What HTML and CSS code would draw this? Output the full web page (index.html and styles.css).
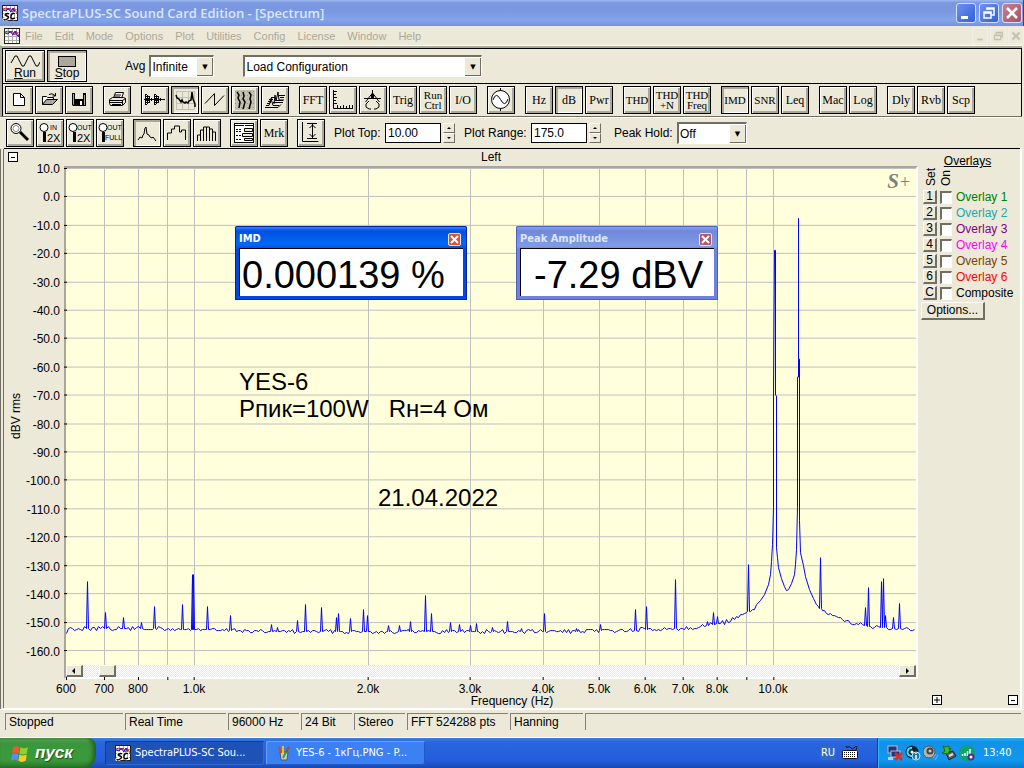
FILE: index.html
```html
<!DOCTYPE html>
<html lang="en">
<head>
  <meta charset="UTF-8">
  <meta name="viewport" content="width=device-width, initial-scale=1.0">
  <title>SpectraPLUS-SC Sound Card Edition - [Spectrum]</title>
  <link rel="stylesheet" href="styles.css">
</head>
<body>
  <!-- Shared drawings -->
  <svg class="defs" aria-hidden="true">
    <symbol id="app-icon" viewBox="0 0 16 16">
      <rect width="16" height="16" fill="#222"/>
      <rect x="1" y="1" width="14" height="14" fill="#fff"/>
      <path d="M4.500 1v14M8.500 1v14M12.500 1v14M1 4.500h14M1 8.500h14M1 12.500h14" stroke="#aaa"/>
      <path d="M1 4l3-1 2 2 2-2 3 4 1-4 2 3 1 3" fill="none" stroke="#e02020"/>
      <path d="M1 5l3 1 2-3 3 4 2-4 2 4 2 2" fill="none" stroke="#1010e0"/>
    </symbol>
    <symbol id="app-icon-sc" viewBox="0 0 16 16">
      <use href="#app-icon"/>
      <path d="M8 9q-1-1-3-1t-2 2 3 2-1 2-3 0M14 9q-3-2-4 2t4 2" fill="none" stroke="#fff" stroke-width="3"/>
      <path d="M7 9q-1-1-3 0t1 2 0 3-3 0M13 9q-3-2-4 2t4 2" fill="none" stroke="#000" stroke-width="1.500"/>
    </symbol>
  </svg>

  <header class="titlebar">
    <svg class="app-icon"><use href="#app-icon-sc"/></svg>
    <h1>SpectraPLUS-SC Sound Card Edition - [Spectrum]</h1>
    <div class="window-buttons">
      <button type="button" aria-label="Minimize"><svg viewBox="0 0 18 18"><path d="M4 12h7v3H4z" fill="#fff"/></svg></button>
      <button type="button" aria-label="Restore"><svg viewBox="0 0 18 18"><path d="M7 6V4h7v7h-3M7 5h7M4 8h7v6H4zM4 9h7" fill="none" stroke="#fff" stroke-width="1.500"/></svg></button>
      <button type="button" class="close" aria-label="Close"><svg viewBox="0 0 18 18"><path d="M4 4l10 10M14 4L4 14" stroke="#fff" stroke-width="2.500"/></svg></button>
    </div>
  </header>

  <nav class="menubar">
    <svg class="app-icon"><use href="#app-icon"/></svg>
    <a href="#">File</a>
    <a href="#">Edit</a>
    <a href="#">Mode</a>
    <a href="#">Options</a>
    <a href="#">Plot</a>
    <a href="#">Utilities</a>
    <a href="#">Config</a>
    <a href="#">License</a>
    <a href="#">Window</a>
    <a href="#">Help</a>
    <div class="child-buttons">
      <button type="button" aria-label="Minimize child"><svg viewBox="0 0 16 16"><path d="M5 12h6" stroke="#c4c1b0" stroke-width="2"/></svg></button>
      <button type="button" aria-label="Restore child"><svg viewBox="0 0 16 16"><path d="M6 6V4h7v5h-2M6 4.500h7M4 7h7v5H4zM4 7.500h7" fill="none" stroke="#c4c1b0" stroke-width="1.500"/></svg></button>
      <button type="button" aria-label="Close child"><svg viewBox="0 0 16 16"><path d="M4 4l8 8M12 4l-8 8" stroke="#c4c1b0" stroke-width="2.500"/></svg></button>
    </div>
  </nav>

  <div class="toolbars">
    <div class="toolbar run-bar">
      <button type="button" class="tool wide">
        <svg viewBox="0 0 30 14"><path d="M1 10l4-7h2l5 10h2l5-10h2l5 10h2l2-4" fill="none" stroke="#000"/></svg>
        <span><u>R</u>un</span>
      </button>
      <button type="button" class="tool wide pressed">
        <svg viewBox="0 0 30 14"><rect x="6.500" y="3.500" width="17" height="10" fill="#aca899" stroke="#000"/></svg>
        <span><u>S</u>top</span>
      </button>
      <label class="avg-label" for="avg">Avg</label>
      <span class="select avg-select"><select id="avg"><option>Infinite</option></select></span>
      <span class="select config-select"><select aria-label="Configuration"><option>Load Configuration</option></select></span>
    </div>

    <div class="toolbar view-bar">
      <div class="group">
        <button type="button" class="tool" aria-label="New"><svg viewBox="1 1 26 26"><path d="M8.500 7.500h7l4 4v8h-11zM15.500 7.500v4h4" fill="#fff" stroke="#000"/></svg></button>
        <button type="button" class="tool" aria-label="Open"><svg viewBox="1 1 26 26"><path d="M7.500 18.500v-8h4l1 1h6v2" fill="#fff" stroke="#000"/><path d="M7.500 18.500l4-5h11l-5 5z" fill="#aca899" stroke="#000"/><path d="M14 8.500q3-2 6 1M20.500 7v3h-3" fill="none" stroke="#000"/></svg></button>
        <button type="button" class="tool" aria-label="Save"><svg viewBox="1 1 26 26"><path d="M7 7h14v13H8l-1-1z"/><rect x="10" y="7" width="8" height="6" fill="#ece9d8"/><path d="M8.500 8v10.500M19.500 9v10" stroke="#aca899"/><rect x="15" y="15" width="2" height="4" fill="#fff"/></svg></button>
      </div>
      <div class="group">
        <button type="button" class="tool" aria-label="Print"><svg viewBox="1 1 26 26"><path d="M10.500 12l2-5.500h8l-2 6M12 9h6M11 11h6" fill="#fff" stroke="#000"/><path d="M6.500 13.500l3-2h11l2 1v4l-3 3h-12l-1-2z" fill="#ece9d8" stroke="#000"/><path d="M6.500 14.500h13l3-2M7 16.500h12M9 18.500h9M19.500 14v5" fill="none" stroke="#000"/></svg></button>
      </div>
      <div class="group">
        <button type="button" class="tool" aria-label="Time series"><svg viewBox="1 1 26 26"><path d="M3 13.500h21M4.500 8v11M6.500 9v9M8.500 10v7M10.500 12v3M13.500 8v11M15.500 9v9M17.500 10v7M19.500 12v3" stroke="#000"/><path d="M5.500 8v11M7.500 10v8M14.500 8v11M16.500 10v8" stroke="#000" stroke-dasharray="1 1"/></svg></button>
        <button type="button" class="tool pressed" aria-label="Spectrum"><svg viewBox="1 1 26 26"><path d="M5.500 5v18M11.500 5v18M17.500 5v18M23.500 5v18M5 5.500h18M5 11.500h18M5 17.500h18M5 23.500h18" stroke="#c4c1b0"/><path d="M5 9l1 3 2 1 2 3 1-2 1 2 2 1 1-1 2 1 1-2 2-1 1-8 1 7 2 5v3" fill="none" stroke="#000" stroke-width="1.500"/></svg></button>
        <button type="button" class="tool" aria-label="Phase"><svg viewBox="1 1 26 26"><path d="M4 17.500l9.500-10v12l9.500-10" fill="none" stroke="#000"/></svg></button>
        <button type="button" class="tool" aria-label="Spectrogram"><svg viewBox="1 1 26 26"><rect x="4" y="4" width="20" height="20" fill="#c4c1b0"/><path d="M4 5.500h20M4 9.500h20M4 13.500h20M4 17.500h20M4 21.500h20" stroke="#999" stroke-dasharray="1 2"/><path d="M6 6l2 3-1 3 2 4-1 6M12 6l1 4-1 3 2 3-2 7M18 6l2 3-1 4 1 3-2 7" fill="none" stroke="#000" stroke-width="1.500"/></svg></button>
        <button type="button" class="tool" aria-label="3-D surface"><svg viewBox="1 1 26 26"><path d="M4 21.500h13l3-3M5 19.500h3l2-7 2 7h6M6 17.500h3l2-6M7 15.500h2M13 18l1-9 1 6 2-9 1 8h5M8 13.500h4M10 11.500h4M18 9.500h6M19 11.500h4M12 16.500h10M14 14.500h8" fill="none" stroke="#000"/></svg></button>
      </div>
      <div class="group">
        <button type="button" class="tool">FFT</button>
        <button type="button" class="tool" aria-label="Scaling"><svg viewBox="1 1 26 26"><path d="M4.500 4v18.500h19M4 5.500h4M4 8.500h3M4 11.500h4M4 14.500h3M4 17.500h4M8.500 22v-3M11.500 22v-2M14.500 22v-3M17.500 22v-2M20.500 22v-3M23.500 23v-4" fill="none" stroke="#000"/></svg></button>
        <button type="button" class="tool" aria-label="Calibration"><svg viewBox="1 1 26 26"><path d="M5 12.500h17M13.500 4v4M13.500 7l-7 9M13.500 7l7 9M10 15l-3 3v3l3 2h2M17 15l3 3v3l-3 2h-2" fill="none" stroke="#000"/><path d="M12 8h3v5h-3z"/></svg></button>
        <button type="button" class="tool">Trig</button>
        <button type="button" class="tool small two-line">Run<br>Ctrl</button>
        <button type="button" class="tool">I/O</button>
      </div>
      <div class="group">
        <button type="button" class="tool" aria-label="Signal generator"><svg viewBox="1 1 26 26"><circle cx="13.500" cy="13.500" r="9" fill="#fff" stroke="#000"/><path d="M13.500 2v3M13.500 22v3M6 14q3-9 7.500-.5t7.500-.5" fill="none" stroke="#000"/></svg></button>
      </div>
      <div class="group">
        <button type="button" class="tool">Hz</button>
        <button type="button" class="tool pressed">dB</button>
        <button type="button" class="tool">Pwr</button>
      </div>
      <div class="group">
        <button type="button" class="tool small">THD</button>
        <button type="button" class="tool small two-line">THD<br>+N</button>
        <button type="button" class="tool small two-line">THD<br>Freq</button>
      </div>
      <div class="group">
        <button type="button" class="tool small pressed">IMD</button>
        <button type="button" class="tool small">SNR</button>
        <button type="button" class="tool">Leq</button>
      </div>
      <div class="group">
        <button type="button" class="tool">Mac</button>
        <button type="button" class="tool">Log</button>
      </div>
      <div class="group">
        <button type="button" class="tool">Dly</button>
        <button type="button" class="tool">Rvb</button>
        <button type="button" class="tool">Scp</button>
      </div>
    </div>
  </div>

  <div class="toolbar plot-bar">
    <div class="group">
      <button type="button" class="tool" aria-label="Zoom"><svg viewBox="1 1 26 26"><circle cx="10" cy="9.500" r="5" fill="#fff" stroke="#000"/><circle cx="10" cy="9.500" r="3" fill="none" stroke="#888"/><path d="M14 13l8 8" stroke="#000" stroke-width="3"/></svg></button>
      <button type="button" class="tool" aria-label="Zoom in 2X"><svg viewBox="1 1 26 26"><circle cx="8" cy="8.500" r="4" fill="#fff" stroke="#000"/><path d="M8.500 13v10" stroke="#000" stroke-width="3"/><text x="14" y="11" font-size="7">IN</text><text x="11" y="23" font-size="11">2X</text></svg></button>
      <button type="button" class="tool" aria-label="Zoom out 2X"><svg viewBox="1 1 26 26"><circle cx="7" cy="8.500" r="4" fill="#fff" stroke="#000"/><path d="M8.500 13v10" stroke="#000" stroke-width="3"/><text x="11" y="11" font-size="7">OUT</text><text x="11" y="23" font-size="11">2X</text></svg></button>
      <button type="button" class="tool" aria-label="Zoom out full"><svg viewBox="1 1 26 26"><circle cx="7" cy="8.500" r="4" fill="#fff" stroke="#000"/><path d="M7.500 13v10" stroke="#000" stroke-width="3"/><text x="11" y="11" font-size="7">OUT</text><text x="9" y="21" font-size="7">FULL</text></svg></button>
    </div>
    <div class="group">
      <button type="button" class="tool pressed" aria-label="Line"><svg viewBox="1 1 26 26"><path d="M5 21l2-3 2 1 1-3 1-1 1-6 1-1 1 7 2 1 1 2 2 1 1-1 3 4" fill="none" stroke="#000"/></svg></button>
      <button type="button" class="tool" aria-label="Steps"><svg viewBox="1 1 26 26"><path d="M4.500 21v-7h4v-4h3v-3h5v6h2v-2h4v10" fill="none" stroke="#000"/></svg></button>
      <button type="button" class="tool" aria-label="Bars"><svg viewBox="1 1 26 26"><path d="M4.500 22v-6h3v6M7.500 17v-6h3v11M10.500 12v-4h3v14M13.500 8h3v14M16.500 10h3v12M19.500 13h3v9" fill="none" stroke="#000"/></svg></button>
    </div>
    <div class="group">
      <button type="button" class="tool" aria-label="Plot options"><svg viewBox="1 1 26 26"><rect x="4.500" y="4.500" width="19" height="19" fill="#fff" stroke="#000"/><path d="M4 6.500h20" stroke="#000" stroke-dasharray="10 1"/><path d="M6 10.500h6M6 12.500h6M6 16.500h6M6 20.500h6" stroke="#000" stroke-dasharray="2 1"/><path d="M14.500 9.500h8v3h-8zM12.500 14.500h10v3h-10zM14.500 19.500h8v2h-8z" fill="#ece9d8" stroke="#000"/></svg></button>
      <button type="button" class="tool">Mrk</button>
    </div>
    <div class="group">
      <button type="button" class="tool" aria-label="Auto range"><svg viewBox="1 1 26 26"><path d="M5.500 3v19.500h16M10 4.500h10M10 19.500h10M15.500 5v14M12.500 9l3-3 3 3M12.500 15l3 3 3-3" fill="none" stroke="#000"/></svg></button>
    </div>
    <div class="field">
      <label for="plotTop">Plot Top:</label>
      <input type="text" id="plotTop" value="10.00">
      <span class="spinner"><button type="button" aria-label="Top up"></button><button type="button" class="down" aria-label="Top down"></button></span>
    </div>
    <div class="field">
      <label for="plotRange">Plot Range:</label>
      <input type="text" id="plotRange" value="175.0">
      <span class="spinner"><button type="button" aria-label="Range up"></button><button type="button" class="down" aria-label="Range down"></button></span>
    </div>
    <div class="field peak-hold">
      <label for="peakHold">Peak Hold:</label>
      <span class="select"><select id="peakHold"><option>Off</option></select></span>
    </div>
  </div>

  <main class="workspace">
    <section class="chart">
      <div class="chart-corner"><button type="button" class="box-button" aria-label="Collapse"><svg viewBox="0 0 8 8"><path d="M2 4.500h4" stroke="#000"/></svg></button></div>
      <h2 class="chart-title">Left</h2>

      <div class="y-title">dBV rms</div>
      <div class="y-labels" id="yLabels"></div>

      <div class="plot">
        <svg id="plotSvg" viewBox="0 0 850 498" preserveAspectRatio="none"></svg>
        <div class="brand">S<span>+</span></div>
        <p class="note note-device">YES-6<br>Pпик=100W&nbsp;&nbsp; Rн=4 Ом</p>
        <p class="note note-date">21.04.2022</p>

        <div class="meter imd active">
          <div class="meter-title"><span>IMD</span><button type="button" aria-label="Close IMD"><svg viewBox="0 0 11 11"><path d="M2 2l7 7M9 2l-7 7" stroke="#fff" stroke-width="2"/></svg></button></div>
          <div class="meter-value">0.000139 %</div>
        </div>
        <div class="meter peak">
          <div class="meter-title"><span>Peak Amplitude</span><button type="button" aria-label="Close Peak Amplitude"><svg viewBox="0 0 11 11"><path d="M2 2l7 7M9 2l-7 7" stroke="#fff" stroke-width="2"/></svg></button></div>
          <div class="meter-value">-7.29 dBV</div>
        </div>
      </div>

      <div class="scrollbar">
        <button type="button" aria-label="Scroll left"><svg viewBox="0 0 6 6"><path d="M4 0v6L1 3z"/></svg></button>
        <button type="button" class="thumb" aria-label="Scroll thumb"></button>
        <button type="button" class="right" aria-label="Scroll right"><svg viewBox="0 0 6 6"><path d="M2 0v6l3-3z"/></svg></button>
      </div>
      <div class="x-labels" id="xLabels"></div>
      <div class="x-title">Frequency (Hz)</div>
    </section>

    <aside class="overlays">
      <h2>Overlays</h2>
      <div class="overlay-head"><span>Set</span><span>On</span></div>
      <div class="overlay"><button type="button">1</button><input type="checkbox" id="ov1"><label for="ov1" class="green">Overlay 1</label></div>
      <div class="overlay"><button type="button">2</button><input type="checkbox" id="ov2"><label for="ov2" class="teal">Overlay 2</label></div>
      <div class="overlay"><button type="button">3</button><input type="checkbox" id="ov3"><label for="ov3" class="purple">Overlay 3</label></div>
      <div class="overlay"><button type="button">4</button><input type="checkbox" id="ov4"><label for="ov4" class="magenta">Overlay 4</label></div>
      <div class="overlay"><button type="button">5</button><input type="checkbox" id="ov5"><label for="ov5" class="brown">Overlay 5</label></div>
      <div class="overlay"><button type="button">6</button><input type="checkbox" id="ov6"><label for="ov6" class="red">Overlay 6</label></div>
      <div class="overlay"><button type="button">C</button><input type="checkbox" id="ovC"><label for="ovC">Composite</label></div>
      <button type="button" class="options">Options...</button>
      <div class="overlay-foot">
        <button type="button" class="box-button" aria-label="Expand panel"><svg viewBox="0 0 8 8"><path d="M1 4h6M4 1v6" stroke="#000"/></svg></button>
        <button type="button" class="box-button" aria-label="Collapse panel"><svg viewBox="0 0 8 8"><path d="M2 4.500h4" stroke="#000"/></svg></button>
      </div>
    </aside>
  </main>

  <footer class="statusbar">
    <span>Stopped</span>
    <span>Real Time</span>
    <span>96000 Hz</span>
    <span>24 Bit</span>
    <span>Stereo</span>
    <span>FFT 524288 pts</span>
    <span>Hanning</span>
    <span></span>
  </footer>

  <div class="taskbar">
    <button type="button" class="start">
      <svg viewBox="0 0 20 18">
        <path d="M3 3q3-2 6 0L8 9Q5 7 2 9z" fill="#f0592a"/>
        <path d="M10 3q3 2 7 0l-1 6q-4 2-7 0z" fill="#8fd02a"/>
        <path d="M2 10q3-2 6 0l-1 6q-3-2-6 0z" fill="#5c8cf5"/>
        <path d="M9 10q3 2 7 0l-1 6q-4 2-7 0z" fill="#fbc92a"/>
      </svg>
      <span>пуск</span>
    </button>
    <button type="button" class="task current"><svg class="app-icon"><use href="#app-icon-sc"/></svg><span>SpectraPLUS-SC Sou...</span></button>
    <button type="button" class="task">
      <svg class="app-icon" viewBox="0 0 16 16"><path d="M4 7h8l-1 8H5z" fill="#c8ccc8" stroke="#556"/><path d="M5 8L3 2" stroke="#e04020" stroke-width="2"/><path d="M7 8V1" stroke="#f0c020" stroke-width="2"/><path d="M9 9l4-7" stroke="#a05020" stroke-width="2"/><path d="M7 13l3-6" stroke="#30a040" stroke-width="2"/></svg>
      <span>YES-6 - 1кГц.PNG - P...</span>
    </button>
    <div class="language">
      <span>RU</span>
      <svg viewBox="0 0 16 14"><path d="M4 0q0 2 2 1t3 1 4-1 1 3" fill="none" stroke="#111"/><rect x=".5" y="4.500" width="15" height="8" rx="1" fill="#fff" stroke="#111"/><path d="M2 6.500h12M2 8.500h12M2 10.500h12" stroke="#111" stroke-dasharray="1 1"/></svg>
    </div>
    <div class="tray">
      <svg viewBox="0 0 16 16"><rect x="1" y="1" width="9" height="7" fill="#26357a" stroke="#b8bccc"/><rect x="4" y="6" width="9" height="6" fill="#26357a" stroke="#b8bccc"/><path d="M1 12h5v3H1z" fill="#c8ccd8"/><path d="M8 8l7 7M15 8l-7 7" stroke="#e82818" stroke-width="2.500"/></svg>
      <svg viewBox="0 0 16 16"><circle cx="7" cy="7" r="6.500" fill="#0c2430"/><path d="M7 3a4 4 0 1 0 3 6" fill="none" stroke="#48d8f0" stroke-width="2"/><circle cx="7" cy="7" r="1.500" fill="#fff"/><circle cx="11" cy="11" r="4" fill="#1878a8" stroke="#bfe8f4"/><path d="M11 8v1M11 10v4" stroke="#fff" stroke-width="1.500"/></svg>
      <svg viewBox="0 0 16 16"><circle cx="6" cy="7" r="6" fill="#b4b4a8" stroke="#555"/><circle cx="7" cy="6" r="3.500" fill="#444"/><circle cx="7" cy="6" r="1.500" fill="#ccc"/><path d="M10 13l3-4M12 15l3-5" stroke="#88a8ff"/></svg>
      <svg viewBox="0 0 16 16"><path d="M5 8l7-2 3 5-7 4z" fill="#556058" stroke="#222"/><path d="M8 11l4-2" stroke="#ddd" stroke-width="2"/><path d="M2 1l2 1 4-1v3l2-1-3 6-6-1 3-2z" fill="#38c028" stroke="#1c6818"/></svg>
      <svg viewBox="0 0 16 16"><circle cx="8" cy="8" r="8" fill="#12a070"/><path d="M3.500 11V9M6 11V8M8.500 11V6M11 11V4" stroke="#fff" stroke-width="1.500"/><circle cx="12" cy="12" r="3.500" fill="#5a2890"/><circle cx="12" cy="12" r="1.500" fill="#fff"/></svg>
      <time>13:40</time>
    </div>
  </div>

  <script src="script.js"></script>
</body>
</html>
```

FILE: styles.css
```css
* {
  box-sizing: border-box;
}

body {
  margin: 0;
  height: 100vh;
  min-height: 600px;
  display: flex;
  flex-direction: column;
  background-color: #ece9d8;
  color: #000;
  font-family: "Liberation Sans", Arial, sans-serif;
  font-size: 12px;
  line-height: 14px;
}

h1, h2, p {
  margin: 0;
  font-size: inherit;
  font-weight: normal;
}

button, select, input {
  font: inherit;
  color: inherit;
  margin: 0;
  padding: 0;
  border-radius: 0;
}

svg {
  display: block;
}

.defs {
  position: absolute;
  width: 0;
  height: 0;
}

.app-icon {
  width: 16px;
  height: 16px;
  flex: none;
}

/* Title bar */
.titlebar {
  flex: none;
  display: flex;
  align-items: center;
  gap: 4px;
  height: 26px;
  padding: 0 1px 0 2px;
  background: linear-gradient(#9db9ee, #7a96df 3px, #7b98e2 12px, #82a6ea 20px, #7890dc);
  border-right: 1px solid #3c3c9c;
}

.titlebar h1 {
  flex: 1;
  color: #dce6fa;
  font-family: "Open Sans", "Trebuchet MS", sans-serif;
  font-size: 13px;
  font-weight: 600;
  line-height: 18px;
}

.window-buttons {
  display: flex;
  gap: 3px;
}

.window-buttons button {
  width: 20px;
  height: 20px;
  border: 1px solid #d4def8;
  border-radius: 3px;
  background: linear-gradient(135deg, #6f92ee, #2f5fdc);
}

.window-buttons .close {
  background: linear-gradient(135deg, #c88098, #a8505e);
}

/* Menu */
.menubar {
  flex: none;
  display: flex;
  align-items: center;
  gap: 12px;
  height: 19px;
  padding-left: 4px;
  font-family: "Liberation Sans", Tahoma, sans-serif;
  font-size: 11px;
}

.menubar .app-icon {
  margin-right: -7px;
}

.menubar a {
  color: #aca899;
  text-decoration: none;
}

.child-buttons {
  display: flex;
  gap: 2px;
  margin-left: auto;
}

.child-buttons button {
  width: 16px;
  height: 16px;
  border: 1px solid #f2f0e4;
  background: none;
}

/* Toolbars */
.toolbars {
  flex: none;
  margin-right: 2px;
  border-left: 2px solid #aca899;
  border-top: 1px solid #fff;
  border-bottom: 1px solid #716f64;
  box-shadow: inset 0 2px #aca899, inset 0 3px #000, inset 1px 0 #000, inset -1px 0 #000;
  padding-top: 3px;
}

.toolbar {
  display: flex;
  align-items: center;
  padding-left: 3px;
}

.run-bar {
  height: 35px;
  gap: 2px;
  border-bottom: 1px solid #000;
}

.view-bar {
  height: 32px;
  gap: 10px;
}

.plot-bar {
  flex: none;
  height: 32px;
  gap: 9px;
  padding-left: 2px;
  margin: 0 4px 0 4px;
  border-top: 1px solid #fff;
  border-bottom: 1px solid #000;
}

.group {
  display: flex;
  gap: 2px;
}

.tool {
  flex: none;
  display: flex;
  align-items: center;
  justify-content: center;
  width: 28px;
  height: 28px;
  border: 1px solid #000;
  background-color: #ece9d8;
  box-shadow: inset 1px 1px #fff, inset -2px -2px #aca899;
  font-family: "Liberation Serif", "Times New Roman", serif;
  font-size: 12px;
  line-height: 12px;
}

.tool.pressed {
  box-shadow: inset 2px 2px #aca899, inset -1px -1px #fff;
}

.tool.small {
  font-size: 11px;
}

.tool.two-line {
  line-height: 10px;
}

.tool svg {
  width: 26px;
  height: 26px;
  font-family: "Liberation Sans", Arial, sans-serif;
}

.tool.wide {
  flex-direction: column;
  width: 40px;
  height: 32px;
  font-family: "Liberation Sans", Arial, sans-serif;
}

.tool.wide svg {
  width: 30px;
  height: 14px;
}

.avg-label {
  margin-left: 36px;
}

.select {
  position: relative;
  display: flex;
}

.select select {
  appearance: none;
  width: 100%;
  height: 22px;
  padding-left: 1px;
  border: 1px solid #fff;
  border-top: 2px solid #716f64;
  border-left: 2px solid #716f64;
  background-color: #fff;
}

/* drop-down arrow lies over the select */
.select::after {
  content: "▼";
  position: absolute;
  top: 2px;
  right: 1px;
  width: 17px;
  height: 19px;
  background-color: #ece9d8;
  box-shadow: inset 1px 1px #fff, inset -1px -1px #716f64;
  font-family: "DejaVu Sans", sans-serif;
  font-size: 7px;
  line-height: 20px;
  text-align: center;
  pointer-events: none;
}

.avg-select {
  width: 65px;
  margin-left: 2px;
}

.config-select {
  width: 239px;
  margin-left: 27px;
}

.field {
  display: flex;
  align-items: center;
  gap: 2px;
}

.field label {
  width: 49px;
}

.field + .field label {
  width: 65px;
}

.field input {
  width: 56px;
  height: 20px;
  padding-left: 2px;
  border: 1px solid #000;
  background-color: #fff;
}

.spinner {
  display: flex;
  flex-direction: column;
}

.spinner button {
  width: 12px;
  height: 10px;
  border: 1px solid #fff;
  border-right-color: #716f64;
  border-bottom-color: #716f64;
  background: #ece9d8;
}

.spinner button::after {
  content: "";
  display: block;
  margin: 0 auto;
  width: 0;
  border: 2px solid transparent;
  border-top-width: 0;
  border-bottom-color: #000;
}

.spinner .down::after {
  border-width: 2px 2px 0;
  border-top-color: #000;
}

.peak-hold {
  margin-left: 4px;
}

.field.peak-hold label {
  width: 61px;
}

.peak-hold .select {
  width: 70px;
}

/* Chart */
.workspace {
  flex: 1;
  display: flex;
  min-height: 0;
  margin-right: 2px;
  border-left: 4px double #716f64;
  border-right: 2px solid #fff;
  border-bottom: 1px solid #fff;
}

.chart {
  flex: 1;
  display: grid;
  grid-template-columns: 20px 40px minmax(0, 1fr);
  grid-template-rows: 17px minmax(0, 1fr) 14px 14px 15px;
}

.chart-corner {
  grid-column: 1 / 3;
  padding: 3px 4px;
}

.box-button {
  display: block;
  width: 10px;
  height: 10px;
  border: 1px solid #000;
  background-color: #fff;
}

.chart-title {
  text-align: center;
  line-height: 17px;
}

.y-title {
  grid-row: 2;
  padding-right: 4px;
  writing-mode: vertical-rl;
  transform: rotate(180deg);
  line-height: 16px;
  text-align: center;
}

.y-labels {
  grid-row: 2;
  display: grid;
  grid-template-rows: repeat(17, 2fr) 1fr;
  padding-top: 2px;
}

/* tiny line height centres each number on its grid line */
.y-labels span {
  line-height: 2px;
  padding-right: 4px;
  text-align: right;
}

.plot {
  position: relative;
  background-color: #ffffdc;
  border: 2px solid #aca899;
  border-right-color: #fff;
  border-bottom: 0;
}

.plot > svg {
  position: absolute;
  inset: 0;
  width: 100%;
  height: 100%;
  overflow: visible;
}

.grid-line {
  stroke: #c0c0c0;
}

.tick {
  stroke: #000;
}

.trace {
  fill: none;
  stroke: #0000ff;
  vector-effect: non-scaling-stroke;
}

.brand {
  position: absolute;
  top: 3px;
  right: 5px;
  color: #808080;
  font-family: "Liberation Serif", "Times New Roman", serif;
  font-size: 21px;
  font-style: italic;
  font-weight: bold;
  line-height: 20px;
}

.brand span {
  font-size: 18px;
  font-weight: normal;
}

.note {
  position: absolute;
  font-size: 24px;
  line-height: 27px;
  white-space: nowrap;
}

.note-device {
  left: 173px;
  top: 200px;
}

.note-date {
  left: 312px;
  top: 316px;
}

.meter {
  position: absolute;
  top: 58px;
  padding: 0 4px 4px;
  border-radius: 2px 2px 0 0;
  background: linear-gradient(#8ba6ea, #7088dc 5px, #7f9ce6 20px, #6c82dc 24px);
  box-shadow: inset 0 0 0 1px #4c60c0;
}

.meter.active {
  background: linear-gradient(#4090ff, #0050e0 5px, #0068f8 18px, #0048e0 24px);
  box-shadow: inset 0 0 0 1px #0024a8;
}

.imd {
  left: 169px;
  width: 232px;
}

.peak {
  left: 450px;
  width: 202px;
}

.meter-title {
  display: flex;
  align-items: center;
  justify-content: space-between;
  height: 22px;
  padding-top: 4px;
  color: #dce6fa;
  font-family: "DejaVu Sans Condensed", Tahoma, sans-serif;
  font-size: 11px;
  font-weight: bold;
}

.active .meter-title {
  color: #fff;
}

.meter-title button {
  width: 13px;
  height: 13px;
  margin-right: 2px;
  border: 1px solid #dce6fa;
  border-radius: 2px;
  background-color: #b0586c;
}

.active .meter-title button {
  background-color: #e0512c;
}

.meter-value {
  height: 48px;
  border-top: 1px solid #000;
  border-left: 1px solid #000;
  background-color: #fff;
  padding-left: 2px;
  font-size: 38px;
  line-height: 52px;
  white-space: nowrap;
}

.peak .meter-value {
  padding-left: 13px;
}

.scrollbar {
  grid-column: 3;
  display: flex;
  gap: 16px;
  border-left: 2px solid #aca899;
  border-right: 2px solid #fff;
  border-bottom: 2px solid #fff;
  background: repeating-conic-gradient(#fff 0 25%, #ece9d8 0 50%) 0 0 / 2px 2px;
}

.scrollbar button {
  display: flex;
  align-items: center;
  justify-content: center;
  width: 17px;
  border: 1px solid #fff;
  border-right: 2px solid #716f64;
  border-bottom: 2px solid #716f64;
  background-color: #ece9d8;
}

.scrollbar svg {
  width: 6px;
  height: 6px;
}

.scrollbar .right {
  margin-left: auto;
}

.x-labels {
  grid-column: 3;
  position: relative;
  margin: 0 2px;
}

.x-labels span {
  position: absolute;
  top: 3px;
  transform: translateX(-50%);
}

.x-labels span::before {
  content: "";
  position: absolute;
  left: 50%;
  top: -5px;
  height: 3px;
  border-left: 1px solid #000;
}

.x-title {
  grid-column: 3;
  padding-left: 42px;
  text-align: center;
  line-height: 16px;
}

/* Overlays */
.overlays {
  flex: none;
  display: flex;
  flex-direction: column;
  width: 102px;
  padding: 5px 0 3px 3px;
}

.overlays h2 {
  padding-right: 6px;
  text-align: center;
  text-decoration: underline;
}

.overlay-head {
  display: flex;
  gap: 1px;
  padding-left: 3px;
  height: 21px;
}

.overlay-head span {
  writing-mode: vertical-rl;
  transform: rotate(180deg);
  width: 14px;
  padding-top: 3px;
}

.overlay {
  display: flex;
  align-items: center;
  height: 16px;
  padding-left: 2px;
}

.overlay button, .options {
  border: 1px solid #fff;
  border-right: 2px solid #716f64;
  border-bottom: 2px solid #716f64;
  background-color: #ece9d8;
  line-height: 11px;
}

.overlay button {
  width: 14px;
  height: 14px;
}

.overlay input {
  appearance: none;
  width: 12px;
  height: 13px;
  margin: 0 4px 0 3px;
  border: 1px solid #fff;
  border-top: 2px solid #716f64;
  border-left: 2px solid #716f64;
  background-color: #fff;
}

.green { color: #008000; }
.teal { color: #20a8a8; }
.purple { color: #800080; }
.magenta { color: #ff00ff; }
.brown { color: #804000; }
.red { color: #ff0000; }

.options {
  width: 64px;
  height: 18px;
  margin-top: 1px;
}

.overlay-foot {
  display: flex;
  justify-content: space-between;
  margin-top: auto;
  padding: 0 2px 0 11px;
}

/* Status bar */
.statusbar {
  flex: none;
  display: grid;
  grid-template-columns: 118px 101px 71px 51px 51px 101px 73px 1fr;
  gap: 2px;
  height: 29px;
  padding: 3px 3px 7px 5px;
  border-top: 1px solid #fff;
  border-bottom: 1px solid #fff;
}

.statusbar span {
  padding: 1px 0 0 3px;
  border-top: 1px solid #808080;
  border-left: 1px solid #808080;
  white-space: nowrap;
}

/* Taskbar */
.taskbar {
  flex: none;
  display: flex;
  align-items: center;
  gap: 2px;
  height: 30px;
  background: linear-gradient(#3a80e8, #2a66dc 4px, #245edc 22px, #1a48b0);
  color: #fff;
  font-family: "DejaVu Sans Condensed", Tahoma, sans-serif;
  font-size: 11px;
}

.taskbar button {
  display: flex;
  align-items: center;
  border: 0;
}

.start {
  width: 96px;
  height: 30px;
  gap: 4px;
  margin-right: 7px;
  padding-left: 10px;
  border-radius: 0 8px 12px 0;
  background: linear-gradient(#62b062, #3c963c 5px, #3a9a3a 22px, #2a782a);
  box-shadow: inset -3px 0 4px #206020;
}

.taskbar .start span {
  font-family: "Liberation Sans", Arial, sans-serif;
  font-size: 17px;
  font-style: italic;
  font-weight: bold;
  text-shadow: 1px 1px 1px #205020;
}

.start svg {
  width: 21px;
  height: 19px;
}

.task {
  width: 159px;
  height: 24px;
  gap: 4px;
  padding-left: 10px;
  border-radius: 2px;
  background-color: #3c81f3;
  box-shadow: inset 1px 1px #6aa0f8, inset -1px -1px #2058c8;
  white-space: nowrap;
}

.task.current {
  background-color: #1e52b7;
  box-shadow: inset 1px 1px #143c90, inset -1px -1px #3068d0;
}

.language {
  display: flex;
  align-items: center;
  gap: 7px;
  margin-left: auto;
  margin-right: 17px;
}

.language span {
  background-color: #316ac5;
}

.language svg {
  width: 16px;
  height: 14px;
}

.tray {
  display: flex;
  align-items: center;
  gap: 2px;
  width: 147px;
  height: 30px;
  padding-left: 9px;
  border-left: 1px solid #0a3c90;
  background: linear-gradient(#20b0f4, #1290e8 4px, #1198ee 22px, #0e78c8);
  box-shadow: inset 1px 0 #38b8f8;
}

.tray svg {
  width: 16px;
  height: 16px;
}

.tray time {
  margin-left: 6px;
}
```

FILE: script.js
```javascript
const WIDTH = 850;
const HEIGHT = 498;
const TOP_DB = 10;
const RANGE_DB = 175.3;
const DECADE = 579;
const START_HZ = 600;

const svg = document.getElementById('plotSvg');

function freqToX(hz) {
  return Math.log10(hz / START_HZ) * DECADE;
}

function dbToY(db) {
  return (TOP_DB - db) / RANGE_DB * HEIGHT;
}

function addShape(name, attrs) {
  const el = document.createElementNS('http://www.w3.org/2000/svg', name);
  for (const key in attrs) {
    el.setAttribute(key, attrs[key]);
  }
  svg.appendChild(el);
}

function addLine(cls, x1, y1, x2, y2) {
  addShape('line', { class: cls, x1: x1, y1: y1, x2: x2, y2: y2 });
}

// Horizontal grid and dB scale
const yLabels = document.getElementById('yLabels');
for (let db = 10; db >= -160; db -= 10) {
  const y = Math.round(dbToY(db)) + 0.5;
  addLine('grid-line', 0, y, WIDTH, y);
  addLine('tick', -2, y, 1, y);
  const label = document.createElement('span');
  label.textContent = db.toFixed(1);
  yLabels.appendChild(label);
}

// Vertical grid and frequency scale
const freqs = [600, 700, 800, 900, 1000, 2000, 3000, 4000, 5000, 6000, 7000, 8000, 9000, 10000];
const xLabels = document.getElementById('xLabels');
freqs.forEach(hz => {
  const x = Math.floor(freqToX(hz));
  if (hz > START_HZ) {
    addLine('grid-line', x + 0.5, 0, x + 0.5, HEIGHT);
  }
  const label = document.createElement('span');
  label.style.left = (x / WIDTH * 100) + '%';
  if (hz === 900 || hz === 9000) {
    label.innerHTML = '&nbsp;';
  } else {
    label.textContent = hz < 1000 ? hz : (hz / 1000).toFixed(1) + 'k';
  }
  xLabels.appendChild(label);
});

// Noise floor and skirts of the two tones, as plot points
const floor = [
  [0, 461], [60, 461], [130, 462], [200, 464], [300, 464], [400, 464], [500, 464],
  [560, 463], [609, 461], [634, 459], [646, 457], [658, 455], [664, 453], [672, 450],
  [679, 446], [684, 443], [690, 438], [694, 433], [698, 427], [702, 417], [704, 407],
  [705, 394], [706, 377], [707, 340], [707, 228], [708, 82], [709, 82], [709, 227],
  [710, 228], [710, 380], [711, 390], [712, 400], [715, 411], [718, 419], [720, 423],
  [722, 422], [725, 416], [728, 407], [729, 397], [730, 382], [731, 340], [731, 209],
  [732, 209], [732, 50], [732, 191], [733, 191], [733, 353], [734, 385], [737, 398],
  [739, 409], [743, 422], [747, 431], [751, 438], [754, 441], [759, 445], [764, 448],
  [769, 450], [777, 452], [784, 454], [791, 456], [797, 458], [814, 460], [830, 461], [848, 462]
];

// x, top of each narrow line
const peaks = [
  [21, 414], [39, 445], [57, 450], [75, 455], [88, 439], [116, 437], [126, 407], [127, 407],
  [141, 439], [164, 448], [205, 457], [211, 460], [231, 453], [239, 437], [255, 440],
  [270, 450], [272, 446], [284, 451], [297, 442], [301, 448], [322, 458], [333, 458],
  [344, 454], [359, 428], [365, 446], [384, 455], [393, 457], [404, 458], [410, 456],
  [426, 460], [441, 454], [455, 461], [478, 446], [510, 461], [534, 457], [569, 442],
  [580, 439], [609, 412], [641, 454], [647, 445], [651, 449], [682, 397], [754, 390],
  [799, 440], [802, 420], [815, 414], [817, 411], [819, 448], [827, 450], [833, 436]
];

function floorAt(x) {
  for (let i = 1; i < floor.length; i++) {
    if (x <= floor[i][0]) {
      const a = floor[i - 1];
      const b = floor[i];
      return a[1] + (b[1] - a[1]) * (x - a[0]) / (b[0] - a[0] || 1);
    }
  }
  return floor[floor.length - 1][1];
}

let seed = 7;
function noise() {
  seed = (seed * 1103515245 + 12345) % 2147483648;
  return Math.round(seed / 2147483648 * 4 - 2);
}

function nearTones(x) {
  return x > 690 && x < 750;
}

const points = [[0, 466]];
for (let x = 1; x < 849; x++) {
  if (nearTones(x)) {
    floor.filter(p => p[0] === x).forEach(p => points.push(p));
    continue;
  }
  const base = floorAt(x);
  const peak = peaks.find(p => p[0] === x);
  if (peak) {
    points.push([x - 1, base], [x, peak[1]], [x + 1, base]);
  } else if (x % 2 === 0 && !peaks.some(p => Math.abs(p[0] - x) === 1)) {
    points.push([x, base + noise()]);
  }
}

addShape('polyline', {
  class: 'trace',
  points: points.map(p => (p[0] + 0.5) + ',' + (Math.round(p[1]) + 0.5)).join(' '),
  'shape-rendering': 'crispEdges'
});
```
